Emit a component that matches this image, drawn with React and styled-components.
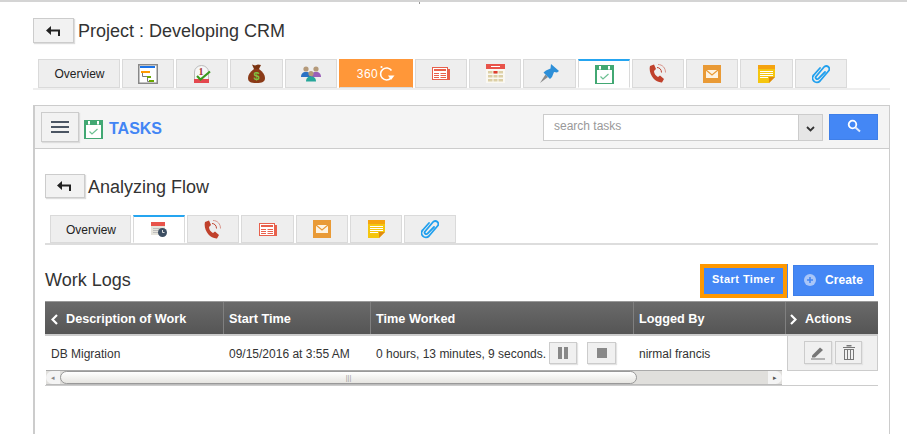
import React from 'react';
import styled, { createGlobalStyle } from 'styled-components';

const GlobalStyle = createGlobalStyle`
  html, body {
    margin: 0;
    padding: 0;
    background: #fff;
    font-family: "Liberation Sans", Arial, sans-serif;
    color: #333;
  }
`;

const Page = styled.div`
  width: 907px;
  height: 434px;
  overflow: hidden;
  box-sizing: border-box;
  border-top: 2px solid #d4d4d4;
  padding: 16px 17px 0 33px;
  position: relative;
`;

const Tick = styled.div`
  position: absolute;
  left: 419px;
  top: 0;
  width: 1px;
  height: 2px;
  background: #999;
`;

const TitleRow = styled.div`
  display: flex;
  align-items: center;
  gap: 4px;
  height: 25px;
`;

const BackButton = styled.button`
  box-sizing: border-box;
  width: ${(p) => p.$w}px;
  height: ${(p) => p.$h}px;
  padding: 0;
  display: flex;
  align-items: center;
  justify-content: center;
  background: #f2f2f2;
  border: 1px solid #ccc;
  box-shadow: 1px 1px 1px #ddd;
`;

const Title = styled.h1`
  margin: 2px 0 0;
  font-size: 18px;
  font-weight: 400;
  color: #333;
`;

const TabBar = styled.div`
  display: flex;
  gap: 2px;
  margin-top: ${(p) => p.$mt}px;
  padding-left: 5px;
  border-bottom: 2px solid ${(p) => p.$line};
  box-sizing: border-box;
  height: ${(p) => p.$h}px;
`;

const Tab = styled.div`
  box-sizing: border-box;
  width: ${(p) => p.$w}px;
  display: flex;
  align-items: center;
  justify-content: center;
  padding: ${(p) => p.$pad || '0'};
  font-size: 12px;
  color: #222;
  background: ${(p) => (p.$active ? '#fff' : p.$orange ? '#ff9739' : '#eee')};
  border: 1px solid ${(p) => (p.$orange ? '#ff9739' : '#dadada')};
  border-bottom-color: ${(p) => (p.$active ? '#fff' : '#dadada')};
  border-top: ${(p) => (p.$active ? '2px solid #25a5f0' : undefined)};
`;

const Three60 = styled.span`
  display: flex;
  align-items: center;
  color: #fff;
  font-size: 12px;
  letter-spacing: 0.5px;
`;

const Panel = styled.section`
  margin-top: 15px;
  height: 340px;
  box-sizing: border-box;
  border: 1px solid #ccc;
  border-bottom: none;
  border-left-width: 2px;
`;

const PanelHeader = styled.header`
  height: 43px;
  box-sizing: border-box;
  display: flex;
  align-items: center;
  padding: 0 11px 0 6px;
  background: #f4f4f4;
  border-bottom: 1px solid #ccc;
`;

const MenuButton = styled.button`
  box-sizing: border-box;
  width: 38px;
  height: 30px;
  padding: 0;
  display: flex;
  flex-direction: column;
  align-items: center;
  justify-content: center;
  gap: 3px;
  background: #f2f2f2;
  border: 1px solid #ccc;
  box-shadow: 1px 1px 1px #ddd;
`;

const MenuLine = styled.span`
  width: 18px;
  height: 2px;
  background: #4b5563;
`;

const PanelTitle = styled.div`
  display: flex;
  align-items: center;
  gap: 6px;
  margin: 4px 0 0 5px;
  font-size: 16px;
  font-weight: 700;
  color: #4285f4;
`;

const SearchBox = styled.div`
  margin-left: auto;
  display: flex;
  align-items: stretch;
  height: 27px;
  box-sizing: border-box;
  width: 280px;
  border: 1px solid #ccc;
  background: #fff;
`;

const SearchInput = styled.div`
  flex: 1;
  padding-left: 10px;
  font-size: 12px;
  line-height: 23px;
  color: #999;
`;

const SearchDrop = styled.div`
  width: 24px;
  display: flex;
  align-items: center;
  justify-content: center;
  padding-top: 4px;
  box-sizing: border-box;
  background: #e6e6e6;
  border-left: 1px solid #ccc;
`;

const SearchButton = styled.button`
  margin: 0 0 1px 6px;
  width: 49px;
  height: 26px;
  box-sizing: border-box;
  padding: 0 0 2px;
  display: flex;
  align-items: center;
  justify-content: center;
  background: #4487f5;
  border: 1px solid #3f7fe8;
`;

const PanelBody = styled.div`
  padding: 25px 11px 0 10px;
`;

const SubTitleRow = styled(TitleRow)`
  height: 24px;
  gap: 3px;
`;

const LogsHeader = styled.div`
  display: flex;
  align-items: flex-start;
  height: 37px;
  margin-top: 19px;
`;

const LogsTitle = styled.h2`
  margin: 6px 0 0;
  font-size: 18px;
  font-weight: 400;
  color: #333;
`;

const StartTimer = styled.button`
  margin-left: auto;
  box-sizing: border-box;
  width: 87px;
  height: 34px;
  padding: 0 0 5px;
  background: #4487f5;
  border: 4px solid #ff9800;
  box-shadow: 1px 0 0 #4487f5;
  color: #fff;
  font: 700 11px "Liberation Sans", Arial, sans-serif;
  letter-spacing: 0.45px;
`;

const CreateButton = styled.button`
  margin: 1px 4px 0 6px;
  box-sizing: border-box;
  width: 81px;
  height: 31px;
  padding: 0 0 1px;
  display: flex;
  align-items: center;
  justify-content: center;
  gap: 9px;
  background: #4487f5;
  border: 1px solid #3f7fe8;
  color: #fff;
  font: 700 12px "Liberation Sans", Arial, sans-serif;
  letter-spacing: 0.1px;
`;

const TableWrap = styled.div`
  display: flex;
  width: 833px;
  border-bottom: 1px solid #ccc;
`;

const ScrollPart = styled.div`
  width: 741px;
`;

const HeadRow = styled.div`
  display: grid;
  grid-template-columns: ${(p) => p.$cols};
  height: 35px;
  box-sizing: border-box;
  border-top: 1px solid #999;
  border-bottom: 2px solid #ccc;
  background: linear-gradient(#6a6a6a, #555);
`;

const HeadCell = styled.div`
  display: flex;
  align-items: center;
  gap: 8px;
  box-sizing: border-box;
  padding: 2px 0 0 ${(p) => p.$pad}px;
  border-right: 1px solid ${(p) => (p.$last ? 'transparent' : '#808080')};
  color: #fff;
  font-size: 12.7px;
  font-weight: 700;
  white-space: nowrap;
`;

const BodyRow = styled.div`
  display: grid;
  grid-template-columns: ${(p) => p.$cols};
  height: 34px;
  align-items: center;
  font-size: 12px;
  color: #333;
`;

const BodyCell = styled.div`
  display: flex;
  align-items: center;
  padding-left: ${(p) => p.$pad}px;
  white-space: nowrap;
`;

const CellText = styled.span`
  margin-top: 2px;
`;

const SmallButton = styled.button`
  box-sizing: border-box;
  width: ${(p) => p.$w}px;
  height: ${(p) => p.$h}px;
  margin-left: ${(p) => p.$ml}px;
  padding: 0;
  display: flex;
  align-items: center;
  justify-content: center;
  background: #f0f0f0;
  border: 1px solid #ccc;
  box-shadow: 1px 1px 1px #e4e4e4;
`;

const ScrollTrack = styled.div`
  display: flex;
  align-items: center;
  justify-content: space-between;
  height: 15px;
  margin: 0 4px 0 1px;
  box-sizing: border-box;
  border-top: 1px solid #aaa;
  border-bottom: 1px solid #bbb;
  background: #e0dfdc;
`;

const ScrollEnd = styled.div`
  width: 14px;
  height: 100%;
  flex: none;
  display: flex;
  align-items: center;
  justify-content: center;
  background: #f4f4f4;
  border-radius: ${(p) => p.$radius};
`;

const ScrollArrow = styled.span`
  color: ${(p) => p.$color};
  font-size: 7px;
`;

const ScrollThumb = styled.div`
  width: 577px;
  height: 13px;
  margin-right: auto;
  box-sizing: border-box;
  display: flex;
  align-items: center;
  justify-content: center;
  border: 1px solid #999;
  border-radius: 7px;
  background: linear-gradient(#fff, #e6e5e1);
  color: #999;
  font-size: 7px;
  line-height: 1;
`;

const ActionsPart = styled.div`
  width: 92px;
`;

const ActionsBody = styled.div`
  height: 35px;
  margin-left: 1px;
  box-sizing: border-box;
  display: flex;
  align-items: flex-start;
  gap: 3px;
  padding: 5px 0 0 16px;
  background: #f0f0f0;
  border: 1px solid #ccc;
  border-top: none;
`;

const BackIcon = () => (
  <svg width="16" height="10" viewBox="0 0 16 10">
    <path d="M0 4.500 5 0v3.400h9V10h-2V5.600H5V9z" fill="#222" />
  </svg>
);

const GanttIcon = () => (
  <svg width="20" height="20" viewBox="0 0 20 20">
    <rect x=".75" y=".75" width="18.5" height="18.5" fill="#fff" stroke="#888" strokeWidth="1.500" />
    <rect x="2" y="2" width="15" height="2" fill="#1a73e8" />
    <rect x="3" y="7" width="9" height="2" fill="#f90" />
    <rect x="9" y="12" width="4" height="2" fill="#6aa800" />
    <rect x="11" y="16" width="5" height="2" fill="#6aa800" />
    <path d="M4.500 9v3.500h4.500M9.500 14v3.500h1.500" fill="none" stroke="#777" />
  </svg>
);

const DeadlineIcon = () => (
  <svg width="17" height="18" viewBox="0 0 17 18">
    <path d="M.5 17.500V7a7 6.500 0 0 1 14 0v10.500z" fill="#f6f6f6" stroke="#bbb" />
    <rect x="0" y="14" width="15" height="4" fill="#e4484f" />
    <text x="4.500" y="9.500" fontSize="10" fontWeight="700" fontFamily="Liberation Serif, serif" fill="#a33">1</text>
    <path d="M3 11 6.500 14.500 16 6.500" fill="none" stroke="#3a9a1e" strokeWidth="2.200" />
  </svg>
);

const MoneyIcon = () => (
  <svg width="17" height="20" viewBox="0 0 17 20">
    <path d="M4 0.500 7 1.500 10 0.500 13 1 11 5H6z" fill="#7a3310" />
    <path d="M6 5h5c4 3 6 6 6 9 0 4-3 5-8.500 5S0 18 0 14c0-3 2-6 6-9z" fill="#8a3a17" />
    <text x="8.500" y="16" fontSize="11" fontWeight="700" textAnchor="middle" fontFamily="Liberation Sans, sans-serif" fill="#7fc241">$</text>
  </svg>
);

const Person = ({ x, y, color }) => (
  <g>
    <path d={`M${x - 5} ${y + 8}c0-3 1.500-5 5-5s5 2 5 5z`} fill={color} />
    <circle cx={x} cy={y} r="2.600" fill="#b59a7a" />
  </g>
);

const TeamIcon = () => (
  <svg width="20" height="16" viewBox="0 0 20 16">
    <Person x={5} y={3} color="#2a72c4" />
    <Person x={15} y={3} color="#9a5fb8" />
    <Person x={10} y={7.500} color="#26a69a" />
  </svg>
);

const Arrow360 = () => (
  <svg width="17" height="17" viewBox="0 0 17 17">
    <path d="M13.500 5.500A6 6 0 1 0 13 13" fill="none" stroke="#fff" strokeWidth="1.600" />
    <path d="M10 10.500h6.500L13 15z" fill="#fff" />
    <circle cx="3.500" cy="2" r="1.100" fill="#fff" />
  </svg>
);

const NewsIcon = () => (
  <svg width="18" height="13" viewBox="0 0 18 13">
    <rect x=".5" y=".5" width="15" height="12" fill="#fff" stroke="#e8604c" />
    <rect x="15" y="2" width="3" height="11" fill="#e8604c" />
    <rect x="2" y="2" width="12" height="2" fill="#e8604c" />
    <path d="M2 6.500h5M2 8.500h5M2 10.500h5M8.500 6.500h5.500M8.500 8.500h5.500M8.500 10.500h5.500" stroke="#e8604c" />
  </svg>
);

const CalendarIcon = () => (
  <svg width="19" height="19" viewBox="0 0 19 19">
    <rect width="19" height="19" fill="#faf8f2" />
    <rect width="19" height="5" fill="#e8534a" />
    <rect x="5" y="2" width="9" height="1" fill="#fff" />
    <path d="M2 7h15v2.500H2zM2 11h15v2.500H2zM2 15h15v2.500H2z" fill="#dccfa5" />
    <path d="M6.500 6.500h1v12h-1zM11.500 6.500h1v12h-1z" fill="#faf8f2" />
    <rect x="7.500" y="7" width="4" height="2.500" fill="#e03c31" />
  </svg>
);

const PinIcon = () => (
  <svg width="19" height="19" viewBox="0 0 19 19">
    <path d="M0 19 5.500 10.500 8 13z" fill="#8a8a8a" />
    <path d="M11 0l8 7-2 1.500-3-.5-2 5-2 2L3.500 8.500 6 6.500 10.500 4.500z" fill="#2d8fd8" />
  </svg>
);

const TaskIcon = () => (
  <svg width="19" height="19" viewBox="0 0 19 19">
    <rect width="19" height="19" fill="#42a873" />
    <rect x="2" y="5" width="15" height="13" fill="#fff" />
    <rect x="4" y="1" width="2" height="3.500" fill="#fff" />
    <rect x="13" y="1" width="2" height="3.500" fill="#fff" />
    <path d="M5.500 11.500 8 14l5.500-5" fill="none" stroke="#6cc092" strokeWidth="1.200" />
  </svg>
);

const PhoneIcon = () => (
  <svg width="18" height="19" viewBox="0 0 18 19">
    <path d="M1 2 5 .5 7 5 5 7C5 10 7 12 9 13L11 11.500 15 15 13 18.500C6 19-1 10 1 2z" fill="#c0412c" />
    <path d="M8 3.500c2.500 0 4.500 2 4.500 5" fill="none" stroke="#c0412c" strokeWidth="1" />
    <path d="M9 .5c4.500 0 7.500 3.500 7.500 8" fill="none" stroke="#d8948a" strokeWidth="1" />
  </svg>
);

const MailIcon = () => (
  <svg width="18" height="18" viewBox="0 0 18 18">
    <rect width="18" height="18" fill="#e99a36" />
    <rect x="3" y="5" width="12" height="8" fill="#fdf3e3" />
    <path d="M3 5l6 5 6-5" fill="none" stroke="#e99a36" strokeWidth="1.200" />
  </svg>
);

const NoteIcon = () => (
  <svg width="17" height="18" viewBox="0 0 17 18">
    <path d="M0 0h17v12l-6 6H0z" fill="#f5c60f" />
    <rect width="17" height="4" fill="#f5a30f" />
    <path d="M2 6.500h13M2 8.500h13M2 10.500h13M2 12.500h8" stroke="#fff" strokeWidth="1" />
    <path d="M17 12h-6v6z" fill="#e08a10" />
  </svg>
);

const ClipIcon = () => (
  <svg width="18" height="20" viewBox="0 0 18 20">
    <path d="M13 8 6.500 14.500A1.600 1.600 0 0 1 4 12.500L12 3A3 3 0 0 1 16.500 7L8 17A4.200 4.200 0 0 1 1.800 11L8 4" fill="none" stroke="#21a0ee" strokeWidth="1.800" strokeLinecap="round" />
  </svg>
);

const ScheduleIcon = () => (
  <svg width="16" height="15" viewBox="0 0 16 15">
    <rect width="14" height="13" fill="#e6e4dc" />
    <rect width="14" height="4" fill="#e8534a" />
    <path d="M2 6.500h10M2 8.500h10M2 10.500h10" stroke="#bdbdbd" />
    <circle cx="11.500" cy="10.500" r="4.500" fill="#3d4f63" />
    <path d="M11.500 8v2.500h2" fill="none" stroke="#ddd" />
  </svg>
);

const SearchIcon = () => (
  <svg width="14" height="14" viewBox="0 0 14 14">
    <circle cx="5.500" cy="5.500" r="3.800" fill="none" stroke="#fff" strokeWidth="1.800" />
    <path d="M8.500 8.500 13 12.500" stroke="#dfe9fb" strokeWidth="2" />
  </svg>
);

const ChevronDown = () => (
  <svg width="9" height="6" viewBox="0 0 9 6">
    <path d="M1 1l3.500 3.500L8 1" fill="none" stroke="#333" strokeWidth="1.800" />
  </svg>
);

const ChevronSide = ({ right }) => (
  <svg width="7" height="11" viewBox="0 0 7 11">
    <path d={right ? 'M1 1 5.500 5.500 1 10' : 'M6 1 1.500 5.500 6 10'} fill="none" stroke="#fff" strokeWidth="2.200" />
  </svg>
);

const PlusCircle = () => (
  <svg width="12" height="12" viewBox="0 0 12 12">
    <circle cx="6" cy="6" r="6" fill="#a9c6f8" />
    <path d="M6 3v6M3 6h6" stroke="#4487f5" strokeWidth="1.600" />
  </svg>
);

const PauseIcon = () => (
  <svg width="10" height="12" viewBox="0 0 10 12">
    <path d="M0 0h4v12H0zM6 0h4v12H6z" fill="#888" />
  </svg>
);

const StopIcon = () => (
  <svg width="10" height="10" viewBox="0 0 10 10">
    <rect width="10" height="10" fill="#888" />
  </svg>
);

const PencilIcon = () => (
  <svg width="14" height="14" viewBox="0 0 14 14">
    <path d="M1 9.500 9 1.500l3 2.500-8 7.500H1z" fill="#777" />
    <rect y="12.500" width="14" height="1" fill="#777" />
  </svg>
);

const TrashIcon = () => (
  <svg width="12" height="15" viewBox="0 0 12 15">
    <path d="M0 2h12v1H0zM3.500 0h5v1.500h-5z" fill="#777" />
    <rect x="1.500" y="4.500" width="9" height="10" fill="none" stroke="#777" />
    <path d="M4.500 4.500v10M7.500 4.500v10" stroke="#777" />
  </svg>
);

const mainTabs = [
  { w: 82, label: 'Overview', pad: '0 0 0 1px' },
  { w: 52, icon: <GanttIcon /> },
  { w: 52, icon: <DeadlineIcon /> },
  { w: 53, icon: <MoneyIcon /> },
  { w: 52, icon: <TeamIcon /> },
  { w: 74, orange: true, icon: <Three60>360<Arrow360 /></Three60> },
  { w: 52, icon: <NewsIcon /> },
  { w: 52, icon: <CalendarIcon /> },
  { w: 53, icon: <PinIcon /> },
  { w: 52, active: true, icon: <TaskIcon /> },
  { w: 52, icon: <PhoneIcon /> },
  { w: 52, icon: <MailIcon /> },
  { w: 53, icon: <NoteIcon /> },
  { w: 52, icon: <ClipIcon /> },
];

const subTabs = [
  { w: 81, label: 'Overview', pad: '2px 0 0 1px' },
  { w: 52, active: true, icon: <ScheduleIcon /> },
  { w: 52, icon: <PhoneIcon /> },
  { w: 53, icon: <NewsIcon /> },
  { w: 52, icon: <MailIcon /> },
  { w: 52, icon: <NoteIcon /> },
  { w: 52, icon: <ClipIcon /> },
];

const COLS = '179px 147px 263px 152px';

const renderTabs = (tabs) =>
  tabs.map((t, i) => (
    <Tab key={i} $w={t.w} $active={t.active} $orange={t.orange} $pad={t.pad}>
      {t.label || t.icon}
    </Tab>
  ));

const App = () => {
  return (
    <Page>
      <GlobalStyle />
      <Tick />
      <TitleRow>
        <BackButton $w={41} $h={25}><BackIcon /></BackButton>
        <Title>Project : Developing CRM</Title>
      </TitleRow>
      <TabBar $mt={16} $h={31} $line="#eee">
        {renderTabs(mainTabs)}
      </TabBar>
      <Panel>
        <PanelHeader>
          <MenuButton>
            <MenuLine />
            <MenuLine />
            <MenuLine />
          </MenuButton>
          <PanelTitle><TaskIcon />TASKS</PanelTitle>
          <SearchBox>
            <SearchInput>search tasks</SearchInput>
            <SearchDrop><ChevronDown /></SearchDrop>
          </SearchBox>
          <SearchButton><SearchIcon /></SearchButton>
        </PanelHeader>
        <PanelBody>
          <SubTitleRow>
            <BackButton $w={40} $h={24}><BackIcon /></BackButton>
            <Title>Analyzing Flow</Title>
          </SubTitleRow>
          <TabBar $mt={17} $h={30} $line="#ddd">
            {renderTabs(subTabs)}
          </TabBar>
          <LogsHeader>
            <LogsTitle>Work Logs</LogsTitle>
            <StartTimer>Start Timer</StartTimer>
            <CreateButton><PlusCircle />Create</CreateButton>
          </LogsHeader>
          <TableWrap>
            <ScrollPart>
              <HeadRow $cols={COLS}>
                <HeadCell $pad={6}><ChevronSide />Description of Work</HeadCell>
                <HeadCell $pad={5}>Start Time</HeadCell>
                <HeadCell $pad={5}>Time Worked</HeadCell>
                <HeadCell $pad={5}>Logged By</HeadCell>
              </HeadRow>
              <BodyRow $cols={COLS}>
                <BodyCell $pad={6}><CellText>DB Migration</CellText></BodyCell>
                <BodyCell $pad={5}><CellText>09/15/2016 at 3:55 AM</CellText></BodyCell>
                <BodyCell $pad={5}>
                  <CellText>0 hours, 13 minutes, 9 seconds.</CellText>
                  <SmallButton $w={28} $h={22} $ml={3}><PauseIcon /></SmallButton>
                  <SmallButton $w={29} $h={22} $ml={10}><StopIcon /></SmallButton>
                </BodyCell>
                <BodyCell $pad={5}><CellText>nirmal francis</CellText></BodyCell>
              </BodyRow>
              <ScrollTrack>
                <ScrollEnd $radius="7px 0 0 7px"><ScrollArrow $color="#888">◂</ScrollArrow></ScrollEnd>
                <ScrollThumb>|||</ScrollThumb>
                <ScrollEnd $radius="0 7px 7px 0"><ScrollArrow $color="#555">▸</ScrollArrow></ScrollEnd>
              </ScrollTrack>
            </ScrollPart>
            <ActionsPart>
              <HeadRow $cols="1fr">
                <HeadCell $pad={4} $last><ChevronSide right />Actions</HeadCell>
              </HeadRow>
              <ActionsBody>
                <SmallButton $w={28} $h={23} $ml={0}><PencilIcon /></SmallButton>
                <SmallButton $w={27} $h={23} $ml={0}><TrashIcon /></SmallButton>
              </ActionsBody>
            </ActionsPart>
          </TableWrap>
        </PanelBody>
      </Panel>
    </Page>
  );
};

export default App;
